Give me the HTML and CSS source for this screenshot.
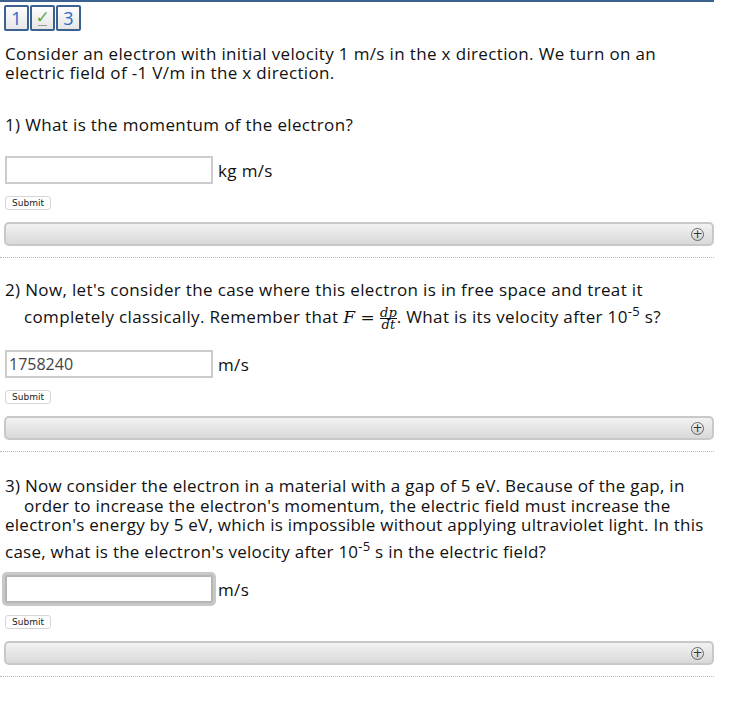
FILE: index.html
```html
<!DOCTYPE html>
<html lang="en">
<head>
  <meta charset="UTF-8" />
  <title>Problem</title>
  <link rel="stylesheet" href="styles.css">
</head>
<body>
  <main class="problem">
    <nav class="tabs">
      <span class="tab">1</span>
      <span class="tab tab-done">&#10003;<span class="tab-mark"></span></span>
      <span class="tab">3</span>
    </nav>
    <p class="intro">Consider an electron with initial velocity 1 m/s in the x direction. We turn on an<br>electric field of -1 V/m in the x direction.</p>

    <!-- Part 1 -->
    <section class="part part-1">
      <p class="question">1) What is the momentum of the electron?</p>
      <div class="answer">
        <input type="text" class="field" value="">
        <span class="unit">kg m/s</span>
      </div>
      <button class="submit">Submit</button>
      <div class="hint-bar"><span class="plus">+</span></div>
    </section>

    <!-- Part 2 -->
    <section class="part part-2">
      <p class="question">
        <span class="line">2) Now, let's consider the case where this electron is in free space and treat it</span>
        <span class="line indent">completely classically. Remember that <span class="math"><i>F</i> = <span class="frac"><i>dp</i><i>dt</i></span></span>. What is its velocity after 10<sup>-5</sup> s?</span>
      </p>
      <div class="answer">
        <input type="text" class="field" value="1758240">
        <span class="unit">m/s</span>
      </div>
      <button class="submit">Submit</button>
      <div class="hint-bar"><span class="plus">+</span></div>
    </section>

    <!-- Part 3 -->
    <section class="part part-3">
      <p class="question">
        <span class="line">3) Now consider the electron in a material with a gap of 5 eV. Because of the gap, in</span>
        <span class="line indent">order to increase the electron's momentum, the electric field must increase the</span>
        <span class="line">electron's energy by 5 eV, which is impossible without applying ultraviolet light. In this</span>
        <span class="line tall">case, what is the electron's velocity after 10<sup>-5</sup> s in the electric field?</span>
      </p>
      <div class="answer">
        <input type="text" class="field focused" value="">
        <span class="unit">m/s</span>
      </div>
      <button class="submit">Submit</button>
      <div class="hint-bar"><span class="plus">+</span></div>
    </section>
  </main>
</body>
</html>
```

FILE: styles.css
```css
body {
  margin: 0;
  background: #ffffff;
  color: #111111;
  font-family: "Open Sans", "DejaVu Sans", sans-serif;
}
.problem {
  width: 714px;
  border-top: 2px solid #3a6190;
}
.tabs {
  display: flex;
  gap: 1px;
  padding: 3px 0 0 4px;
}
.tab {
  position: relative;
  width: 21px;
  height: 22px;
  border: 2px solid #3a6190;
  border-radius: 2px;
  background: linear-gradient(#fdfdfd, #e6e6e6);
  color: #2a6cc4;
  font-size: 18px;
  line-height: 22px;
  text-align: center;
}
.tab-done { color: #5ab14a; font-size: 17px; font-weight: bold; line-height: 19px; }
.tab-mark {
  position: absolute;
  left: 6px;
  bottom: 3px;
  width: 9px;
  height: 1px;
  background: #999;
}
.intro {
  margin: 13px 0 0 5px;
  font-size: 17px;
  letter-spacing: 0.35px;
  line-height: 19px;
}
.part { padding-left: 4px; border-bottom: 1px dotted #b8b8b8; padding-bottom: 11px; }
.question {
  margin: 0;
  padding-left: 1px;
  font-size: 17px;
  letter-spacing: 0.35px;
  line-height: 19px;
}
.part-1 .question { margin-top: 33px; }
.part-2 .question { margin-top: 22px; }
.part-3 .question { margin-top: 24px; letter-spacing: 0.25px; }
.line { display: block; }
.line.indent { padding-left: 19px; margin-top: 8px; }
.part-3 .line.indent { margin-top: 1px; }
.line.tall { margin-top: 8px; }
sup { font-size: 13px; line-height: 0; vertical-align: 7px; }
.math { font-family: "DejaVu Serif", "Liberation Serif", serif; letter-spacing: 0; }
.frac {
  display: inline-flex;
  flex-direction: column;
  vertical-align: middle;
  font-size: 13px;
  line-height: 11px;
  text-align: center;
}
.frac i:first-child { border-bottom: 1px solid #111; }
.answer {
  display: flex;
  align-items: center;
  gap: 5px;
  margin-top: 22px;
}
.part-2 .answer { margin-top: 20px; }
.part-3 .answer { margin-top: 14px; }
.field {
  width: 200px;
  height: 22px;
  margin: 0 0 0 1px;
  padding: 1px 2px;
  border: 2px solid #cccccc;
  font-family: inherit;
  font-size: 16px;
  color: #444444;
  outline: none;
}
.field.focused {
  border-color: #b5b5b5;
  box-shadow: 0 0 0 3px #c8c8c8;
  border-radius: 2px;
}
.unit { font-size: 17px; letter-spacing: 0.35px; }
.submit {
  display: block;
  margin: 12px 0 0 1px;
  height: 14px;
  padding: 0 6px;
  border: 1px solid #d6d6d6;
  border-radius: 3px;
  background: #ffffff;
  font-family: "DejaVu Sans", sans-serif;
  font-size: 9px;
  line-height: 12px;
  color: #222;
}
.hint-bar {
  display: flex;
  justify-content: flex-end;
  align-items: center;
  height: 20px;
  margin-top: 12px;
  padding-right: 8px;
  border: 2px solid #c8c8c8;
  border-radius: 5px;
  background: linear-gradient(#f2f2f2, #d9d9d9);
}
.plus {
  width: 11px;
  height: 11px;
  border: 1px solid #666;
  border-radius: 50%;
  background: linear-gradient(#f4f4f4, #cfcfcf);
  font-family: "DejaVu Sans", sans-serif;
  font-size: 12px;
  line-height: 11px;
  text-align: center;
  color: #333;
}
```
